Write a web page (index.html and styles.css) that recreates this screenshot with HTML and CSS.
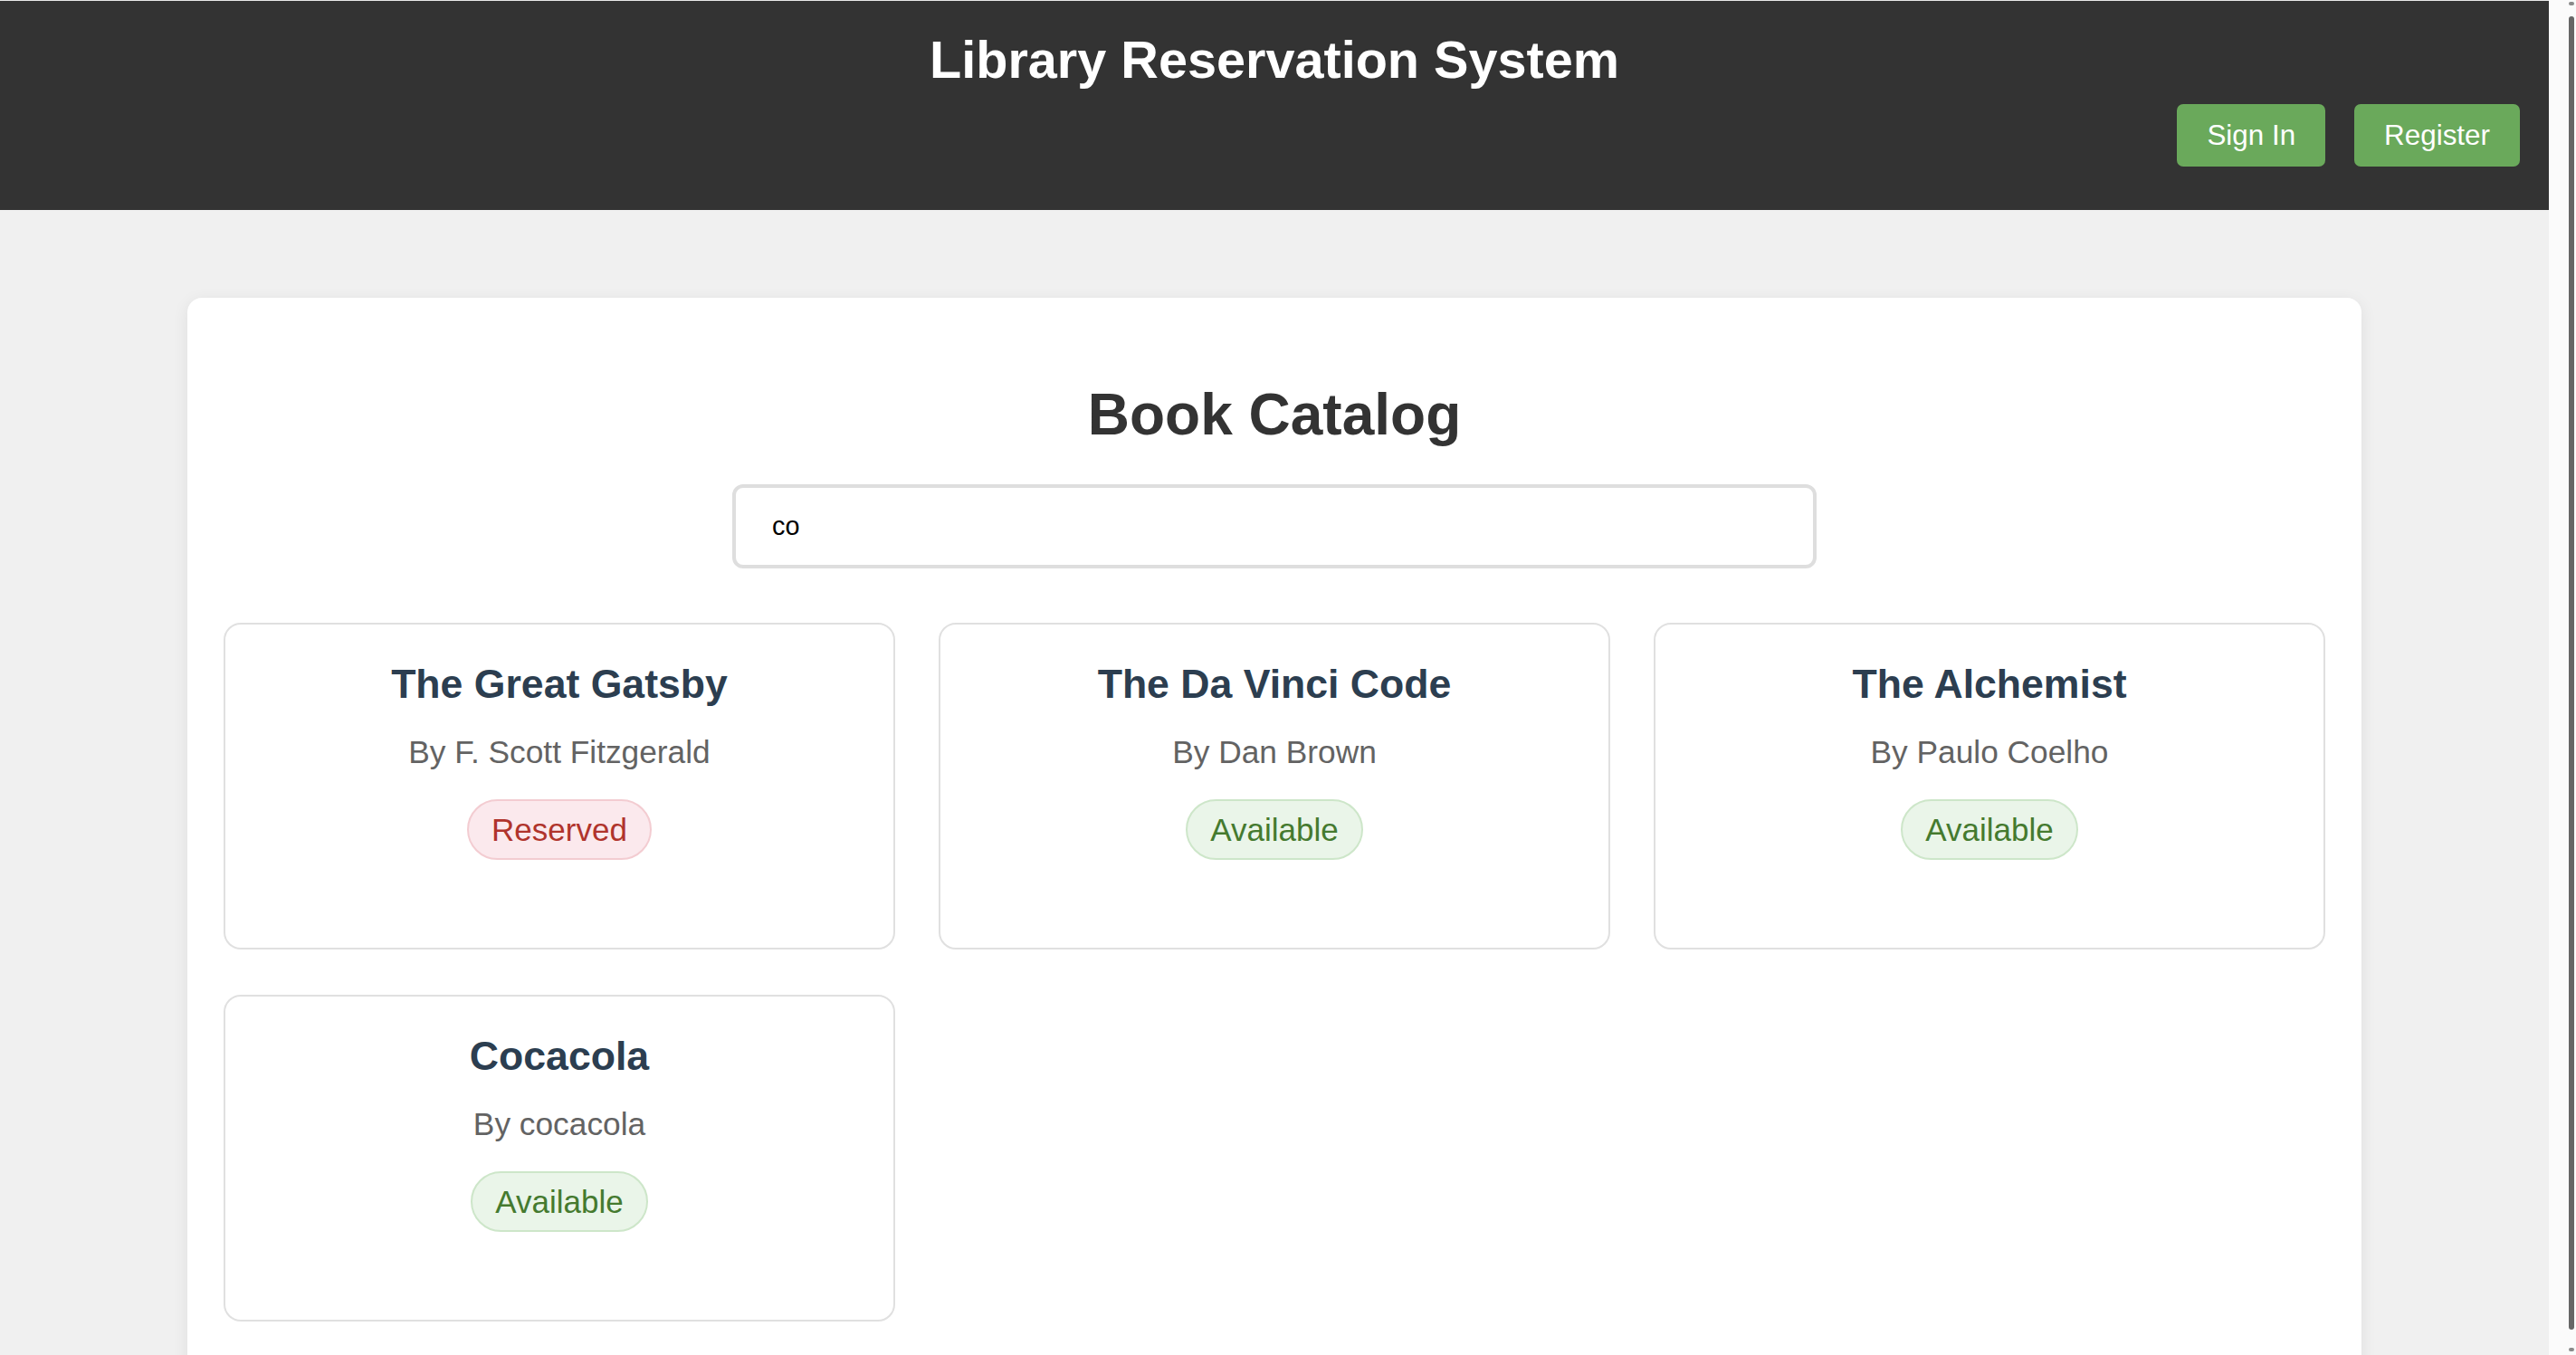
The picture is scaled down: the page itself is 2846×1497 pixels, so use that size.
FILE: index.html
```html
<!DOCTYPE html>
<html lang="en">
<head>
<meta charset="utf-8">
<title>Library Reservation System</title>
<link rel="stylesheet" href="styles.css">
</head>
<body>
  <div class="page">
    <header class="site-header">
      <h1 class="site-title">Library Reservation System</h1>
      <nav class="auth-nav">
        <button class="btn">Sign In</button>
        <button class="btn">Register</button>
      </nav>
    </header>
    <main class="main">
      <section class="catalog">
        <h2 class="catalog-title">Book Catalog</h2>
        <input class="search" type="text" value="co">
        <div class="book-grid">
          <article class="book-card">
            <h3 class="book-title">The Great Gatsby</h3>
            <p class="book-author">By F. Scott Fitzgerald</p>
            <span class="status status-reserved">Reserved</span>
          </article>
          <article class="book-card">
            <h3 class="book-title">The Da Vinci Code</h3>
            <p class="book-author">By Dan Brown</p>
            <span class="status status-available">Available</span>
          </article>
          <article class="book-card">
            <h3 class="book-title">The Alchemist</h3>
            <p class="book-author">By Paulo Coelho</p>
            <span class="status status-available">Available</span>
          </article>
          <article class="book-card">
            <h3 class="book-title">Cocacola</h3>
            <p class="book-author">By cocacola</p>
            <span class="status status-available">Available</span>
          </article>
        </div>
      </section>
    </main>
  </div>
  <aside class="scrollbar">
    <div class="scroll-arrow"></div>
    <div class="scroll-thumb"></div>
    <div class="scroll-arrow"></div>
  </aside>
</body>
</html>
```

FILE: styles.css
```css
html, body {
  margin: 0;
  padding: 0;
  height: 100%;
}

body {
  display: flex;
  overflow: hidden;
  font-family: "Liberation Sans", Arial, sans-serif;
  background: #f0f0f0;
}

.page {
  flex: 1;
  min-width: 0;
  height: 100vh;
  overflow: hidden;
  background: #f0f0f0;
}

.site-header {
  background: #333333;
  border-top: 1px solid #e8e8e8;
  padding: 31px 32px 48px;
  color: #fff;
}

.site-title {
  margin: 0;
  text-align: center;
  font-size: 57.6px;
  font-weight: bold;
  line-height: 68px;
}

.auth-nav {
  display: flex;
  justify-content: flex-end;
  gap: 32px;
  margin-top: 15px;
}

.btn {
  font-family: "Liberation Sans", Arial, sans-serif;
  font-size: 31.4px;
  line-height: 36px;
  color: #fff;
  background: #6aa95b;
  border: none;
  border-radius: 7px;
  padding: 16.5px 33px;
  cursor: pointer;
}

.main {
  padding-top: 97px;
}

.catalog {
  width: 2402px;
  box-sizing: border-box;
  margin: 0 auto;
  background: #fff;
  border-radius: 16px;
  box-shadow: 0 4px 18px rgba(0, 0, 0, 0.08);
  padding: 40px 40px 200px;
}

.catalog-title {
  margin: 52px 0 40px;
  text-align: center;
  font-size: 64px;
  line-height: 74px;
  font-weight: bold;
  color: #333;
}

.search {
  display: block;
  box-sizing: border-box;
  width: 1198px;
  height: 93px;
  margin: 0 auto;
  padding: 0 40px;
  border: 4px solid #dedede;
  border-radius: 12px;
  font-family: "Liberation Sans", Arial, sans-serif;
  font-size: 28.8px;
  color: #000;
  background: #fff;
  outline: none;
}

.book-grid {
  display: grid;
  grid-template-columns: repeat(3, 1fr);
  column-gap: 48px;
  row-gap: 50px;
  margin-top: 60px;
}

.book-card {
  border: 2px solid #e0e0e0;
  border-radius: 19px;
  padding: 41px 20px 97px;
  text-align: center;
  background: #fff;
}

.book-title {
  margin: 0;
  font-size: 44.6px;
  line-height: 50px;
  font-weight: bold;
  color: #2c3e50;
}

.book-author {
  margin: 30px 0 32px;
  font-size: 35.3px;
  line-height: 40px;
  color: #636363;
}

.status {
  display: inline-block;
  padding: 12px 25px;
  border-radius: 40px;
  font-size: 35px;
  line-height: 39px;
  border: 2px solid;
}

.status-reserved {
  background: #fbe9ed;
  border-color: #f3ccd1;
  color: #b0342c;
}

.status-available {
  background: #eaf5e9;
  border-color: #cde6c9;
  color: #457a2f;
}

.scrollbar {
  width: 30px;
  flex: none;
  height: 100vh;
  background: #fbfbfb;
  display: flex;
  flex-direction: column;
  align-items: flex-end;
  padding: 2px 2px 4px 0;
  box-sizing: border-box;
}

.scroll-arrow {
  width: 6px;
  height: 4px;
  border-radius: 2px;
  background: #8a8a8a;
}

.scroll-thumb {
  flex: 1;
  width: 6px;
  margin: 12px 0 20px;
  border-radius: 4px;
  background: #666;
}
```
